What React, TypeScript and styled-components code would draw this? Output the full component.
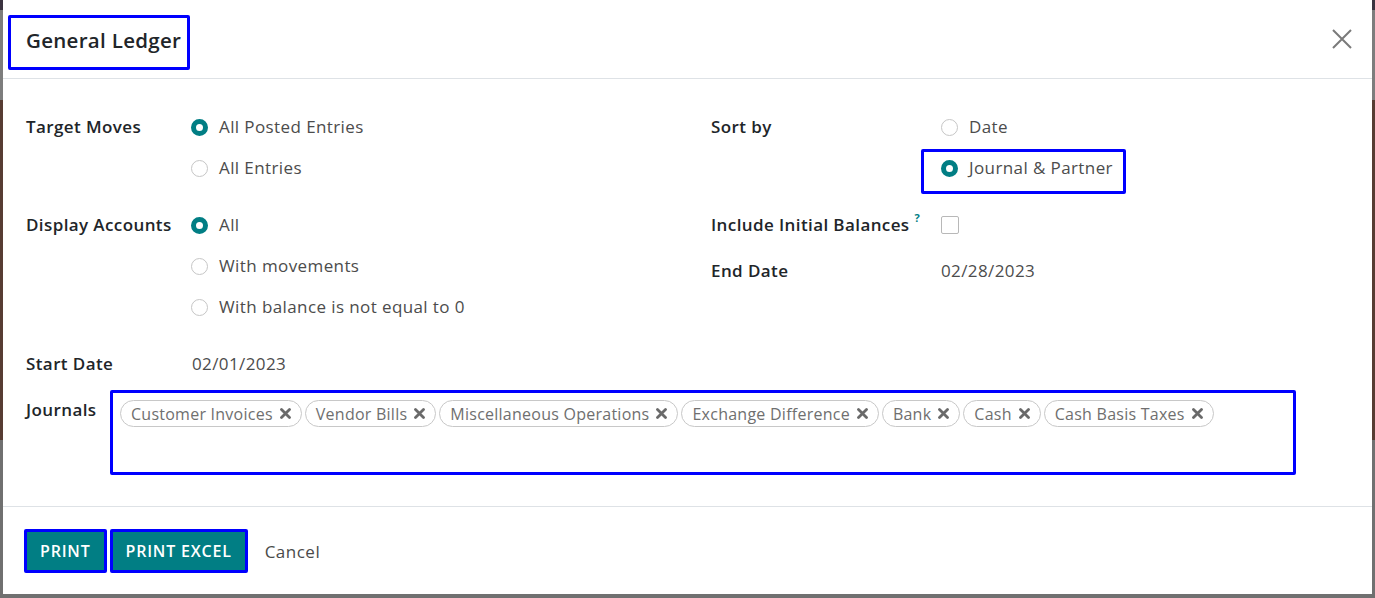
import React from "react";
import styled, { createGlobalStyle, css } from "styled-components";

const TEAL = "#017e84";
const MARK = "#0000ff";

const GlobalStyle = createGlobalStyle`
  html, body {
    margin: 0;
    padding: 0;
  }
  body {
    width: 1375px;
    height: 598px;
    overflow: hidden;
    font-family: "Open Sans", "Noto Sans", sans-serif;
    background: linear-gradient(
      to bottom,
      #3b3340 0,
      #3b3340 10px,
      #7d7d7d 10px,
      #7d7d7d 100px,
      #573c33 100px,
      #573c33 440px,
      #707070 440px
    );
  }
`;

// blue annotation frame drawn round some parts of the screenshot
const marked = css`
  border: 3px solid ${MARK};
  border-radius: 2px;
`;

const Backdrop = styled.div`
  padding: 0 3px 4px 3px;
`;

const Dialog = styled.div`
  background: #fff;
  height: 594px;
  display: flex;
  flex-direction: column;
`;

const Header = styled.header`
  height: 79px;
  box-sizing: border-box;
  display: flex;
  align-items: center;
  justify-content: space-between;
  padding: 15px 20px 8px 5px;
  border-bottom: 1px solid #dee2e6;
`;

const Title = styled.h4`
  ${marked};
  margin: 0;
  width: 182px;
  height: 55px;
  box-sizing: border-box;
  display: flex;
  align-items: center;
  padding: 0 0 5px 15px;
  font-size: 20.5px;
  font-weight: 600;
  letter-spacing: 0.3px;
  color: #212529;
  white-space: nowrap;
`;

const CloseButton = styled.button`
  align-self: flex-start;
  margin-top: 14px;
  width: 20px;
  height: 20px;
  padding: 0;
  border: none;
  background: none;
  cursor: pointer;
  display: flex;
`;

const Body = styled.main`
  flex: 1;
  padding: 36px 24px 0 23px;
`;

const Columns = styled.div`
  display: grid;
  grid-template-columns: 685px 1fr;
`;

const Group = styled.div`
  display: flex;
  flex-direction: column;
`;

const Field = styled.div<{ $labelWidth: number }>`
  display: grid;
  grid-template-columns: ${(p) => p.$labelWidth}px 1fr;
  align-items: start;
  margin-bottom: 22px;
  line-height: 24px;
  font-size: 17px;
  letter-spacing: 0.4px;
`;

const Label = styled.label`
  font-weight: 600;
  color: #212529;
  white-space: nowrap;
`;

const Help = styled.sup`
  color: ${TEAL};
  font-size: 11px;
  font-weight: 700;
  margin-left: 5px;
  vertical-align: 9px;
  line-height: 0;
`;

const Value = styled.span`
  color: #4c4c4c;
`;

const RadioList = styled.div`
  display: flex;
  flex-direction: column;
  align-items: flex-start;
  gap: 17px;
  margin-bottom: 11px;
`;

const Option = styled.div<{ $marked?: boolean }>`
  display: flex;
  align-items: center;
  gap: 11px;
  color: #4c4c4c;
  ${(p) =>
    p.$marked &&
    css`
      ${marked};
      margin: -7px 0 -14px -20px;
      padding: 4px 10px 11px 17px;
    `}
`;

const RadioDot = styled.span<{ $checked?: boolean }>`
  width: 17px;
  height: 17px;
  box-sizing: border-box;
  border-radius: 50%;
  background: #fff;
  border: ${(p) => (p.$checked ? `5.5px solid ${TEAL}` : "1px solid #c6c6c6")};
`;

const Checkbox = styled.span`
  display: block;
  margin-top: 3px;
  width: 18px;
  height: 18px;
  box-sizing: border-box;
  border: 1px solid #b8b8b8;
  border-radius: 2px;
`;

const TagsBox = styled.div`
  ${marked};
  margin-top: -8px;
  width: 1186px;
  height: 85px;
  box-sizing: border-box;
  padding: 7px 7px;
  display: flex;
  flex-wrap: wrap;
  align-content: flex-start;
  gap: 3px;
  letter-spacing: 0.25px;
`;

const Tag = styled.span`
  display: inline-flex;
  align-items: center;
  gap: 7px;
  height: 27px;
  box-sizing: border-box;
  padding: 0 10px 0 10px;
  border: 1px solid #c8c8c8;
  border-radius: 14px;
  color: #6f6f6f;
  font-size: 16px;
`;

const Footer = styled.footer`
  display: flex;
  align-items: center;
  gap: 3px;
  padding: 22px 21px 21px;
  border-top: 1px solid #dee2e6;
`;

const PrimaryButton = styled.button`
  ${marked};
  height: 44px;
  padding: 0 13px;
  background: ${TEAL};
  color: #fff;
  font-family: inherit;
  font-size: 16px;
  font-weight: 600;
  letter-spacing: 0.8px;
  text-transform: uppercase;
  cursor: pointer;
`;

const LinkButton = styled.button`
  margin-left: 11px;
  border: none;
  background: none;
  padding: 0 3px;
  font-family: inherit;
  font-size: 17px;
  font-weight: 500;
  letter-spacing: 0.5px;
  color: #4a4a4a;
  cursor: pointer;
`;

const CloseIcon = () => (
  <svg width="20" height="20" viewBox="0 0 20 20">
    <path d="M1 1 L19 19 M19 1 L1 19" stroke="#7a7a7a" strokeWidth="2" />
  </svg>
);

const RemoveIcon = () => (
  <svg width="11" height="11" viewBox="0 0 11 11">
    <path d="M1.5 1.5 L9.5 9.5 M9.5 1.5 L1.5 9.5" stroke="#6a6a6a" strokeWidth="2.8" strokeLinecap="round" />
  </svg>
);

type Choice = { label: string; checked?: boolean; marked?: boolean };

const Radios = ({ choices }: { choices: Choice[] }) => (
  <RadioList>
    {choices.map((c) => (
      <Option key={c.label} $marked={c.marked}>
        <RadioDot $checked={c.checked} />
        {c.label}
      </Option>
    ))}
  </RadioList>
);

const journals = [
  "Customer Invoices",
  "Vendor Bills",
  "Miscellaneous Operations",
  "Exchange Difference",
  "Bank",
  "Cash",
  "Cash Basis Taxes",
];

export default function App() {
  return (
    <>
      <GlobalStyle />
      <Backdrop>
        <Dialog>
          <Header>
            <Title>General Ledger</Title>
            <CloseButton aria-label="Close">
              <CloseIcon />
            </CloseButton>
          </Header>

          <Body>
            <Columns>
              <Group>
                <Field $labelWidth={165}>
                  <Label>Target Moves</Label>
                  <Radios
                    choices={[
                      { label: "All Posted Entries", checked: true },
                      { label: "All Entries" },
                    ]}
                  />
                </Field>
                <Field $labelWidth={165}>
                  <Label>Display Accounts</Label>
                  <Radios
                    choices={[
                      { label: "All", checked: true },
                      { label: "With movements" },
                      { label: "With balance is not equal to 0" },
                    ]}
                  />
                </Field>
              </Group>
              <Group>
                <Field $labelWidth={230}>
                  <Label>Sort by</Label>
                  <Radios
                    choices={[
                      { label: "Date" },
                      { label: "Journal & Partner", checked: true, marked: true },
                    ]}
                  />
                </Field>
                <Field $labelWidth={230}>
                  <Label>
                    Include Initial Balances<Help>?</Help>
                  </Label>
                  <Checkbox />
                </Field>
                <Field $labelWidth={230}>
                  <Label>End Date</Label>
                  <Value>02/28/2023</Value>
                </Field>
              </Group>
            </Columns>

            <Field $labelWidth={166}>
              <Label>Start Date</Label>
              <Value>02/01/2023</Value>
            </Field>
            <Field $labelWidth={84}>
              <Label>Journals</Label>
              <TagsBox>
                {journals.map((j) => (
                  <Tag key={j}>
                    {j}
                    <RemoveIcon />
                  </Tag>
                ))}
              </TagsBox>
            </Field>
          </Body>

          <Footer>
            <PrimaryButton>Print</PrimaryButton>
            <PrimaryButton>Print Excel</PrimaryButton>
            <LinkButton>Cancel</LinkButton>
          </Footer>
        </Dialog>
      </Backdrop>
    </>
  );
}
